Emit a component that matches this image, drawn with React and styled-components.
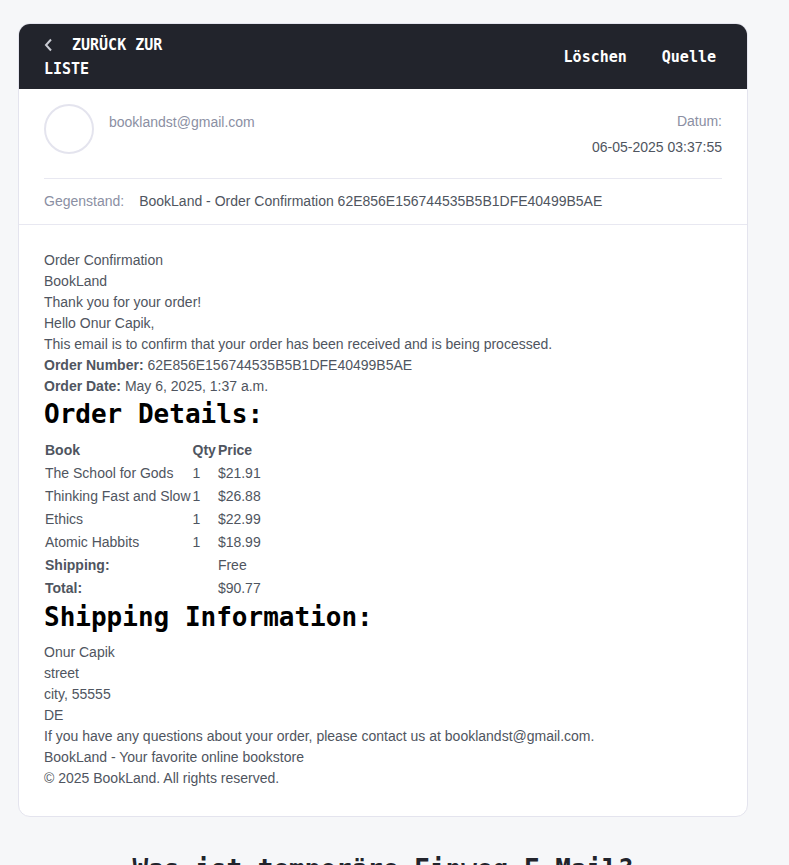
import React from "react";
import styled, { createGlobalStyle } from "styled-components";

const sans = '"Liberation Sans", Arial, Helvetica, sans-serif';
const mono = '"DejaVu Sans Mono", Consolas, monospace';

const GlobalStyle = createGlobalStyle`
  *, *::before, *::after { box-sizing: border-box; }
  html { scrollbar-width: none; }
  body {
    margin: 0;
    background: #f6f7f9;
    color: #4f5560;
    font: 14px/21px ${sans};
  }
`;

const Page = styled.main`
  padding: 23px 41px 0 18px;
`;

const Card = styled.article`
  border: 1px solid #e4e4ee;
  border-radius: 12px;
  background: #fff;
  overflow: hidden;
`;

const Toolbar = styled.header`
  display: flex;
  align-items: center;
  justify-content: space-between;
  padding: 9px 31px 8px 25px;
  background: #22242c;
`;

const BackLink = styled.a`
  max-width: 134px;
  color: #fff;
  font: bold 15px/24px ${mono};
  text-decoration: none;
  text-transform: uppercase;
`;

const BackIcon = styled.svg`
  width: 9px;
  height: 14px;
  margin-right: 19px;
  vertical-align: -2px;
  fill: none;
  stroke: #c9cbd3;
  stroke-width: 2;
`;

const Actions = styled.div`
  display: flex;
  gap: 35px;
`;

const ActionButton = styled.button`
  padding: 0;
  border: 0;
  background: none;
  color: #fff;
  font: bold 15px/24px ${mono};
  cursor: pointer;
`;

const Meta = styled.section`
  padding: 0 25px;
  border-bottom: 1px solid #e8e8f1;
`;

const SenderRow = styled.div`
  display: flex;
  align-items: flex-start;
  gap: 15px;
  padding: 15px 0 14px;
  border-bottom: 1px solid #e8e8f1;
`;

const Avatar = styled.div`
  flex: none;
  width: 50px;
  height: 50px;
  border: 2px solid #e4e4ee;
  border-radius: 50%;
`;

const Sender = styled.span`
  padding-top: 5px;
  color: #8b8fa3;
  line-height: 26px;
`;

const DateBlock = styled.div`
  margin-left: auto;
  padding: 4px 0;
  line-height: 26px;
  text-align: right;
`;

const Label = styled.div`
  color: #8b8fa3;
`;

const SubjectRow = styled.div`
  display: flex;
  gap: 15px;
  padding: 12px 0;
`;

const Message = styled.section`
  padding: 25px 25px 27px;
`;

const Line = styled.p`
  margin: 0;
`;

const SectionTitle = styled.h2`
  margin: 0 0 8px;
  color: #000;
  font: bold 26px/34px ${mono};
`;

const OrderTable = styled.table`
  border-collapse: collapse;

  th, td {
    padding: 1px;
    text-align: left;
  }
`;

const PageTitle = styled.h2`
  margin: 35px 0 0;
  color: #22242c;
  font: bold 26px/34px ${mono};
  text-align: center;
`;

const books = [
  ["The School for Gods", "$21.91"],
  ["Thinking Fast and Slow", "$26.88"],
  ["Ethics", "$22.99"],
  ["Atomic Habbits", "$18.99"],
];

export default function App() {
  return (
    <Page>
      <GlobalStyle />
      <Card>
        <Toolbar>
          <BackLink href="#liste">
            <BackIcon viewBox="0 0 9 14" aria-hidden="true">
              <path d="M7 1.5 2 7l5 5.5" />
            </BackIcon>
            Zurück zur Liste
          </BackLink>
          <Actions>
            <ActionButton type="button">Löschen</ActionButton>
            <ActionButton type="button">Quelle</ActionButton>
          </Actions>
        </Toolbar>
        <Meta>
          <SenderRow>
            <Avatar />
            <Sender>booklandst@gmail.com</Sender>
            <DateBlock>
              <Label>Datum:</Label>
              <time dateTime="2025-05-06T03:37:55">06-05-2025 03:37:55</time>
            </DateBlock>
          </SenderRow>
          <SubjectRow>
            <Label>Gegenstand:</Label>
            <span>BookLand - Order Confirmation 62E856E156744535B5B1DFE40499B5AE</span>
          </SubjectRow>
        </Meta>
        <Message>
          <Line>Order Confirmation</Line>
          <Line>BookLand</Line>
          <Line>Thank you for your order!</Line>
          <Line>Hello Onur Capik,</Line>
          <Line>This email is to confirm that your order has been received and is being processed.</Line>
          <Line><strong>Order Number:</strong> 62E856E156744535B5B1DFE40499B5AE</Line>
          <Line><strong>Order Date:</strong> May 6, 2025, 1:37 a.m.</Line>
          <SectionTitle>Order Details:</SectionTitle>
          <OrderTable>
            <thead>
              <tr>
                <th scope="col">Book</th>
                <th scope="col">Qty</th>
                <th scope="col">Price</th>
              </tr>
            </thead>
            <tbody>
              {books.map(([title, price]) => (
                <tr key={title}>
                  <td>{title}</td>
                  <td>1</td>
                  <td>{price}</td>
                </tr>
              ))}
              <tr>
                <th scope="row" colSpan={2}>Shipping:</th>
                <td>Free</td>
              </tr>
              <tr>
                <th scope="row" colSpan={2}>Total:</th>
                <td>$90.77</td>
              </tr>
            </tbody>
          </OrderTable>
          <SectionTitle>Shipping Information:</SectionTitle>
          <Line>Onur Capik</Line>
          <Line>street</Line>
          <Line>city, 55555</Line>
          <Line>DE</Line>
          <Line>If you have any questions about your order, please contact us at booklandst@gmail.com.</Line>
          <Line>BookLand - Your favorite online bookstore</Line>
          <Line>© 2025 BookLand. All rights reserved.</Line>
        </Message>
      </Card>
      <PageTitle>Was ist temporäre Einweg-E-Mail?</PageTitle>
    </Page>
  );
}
